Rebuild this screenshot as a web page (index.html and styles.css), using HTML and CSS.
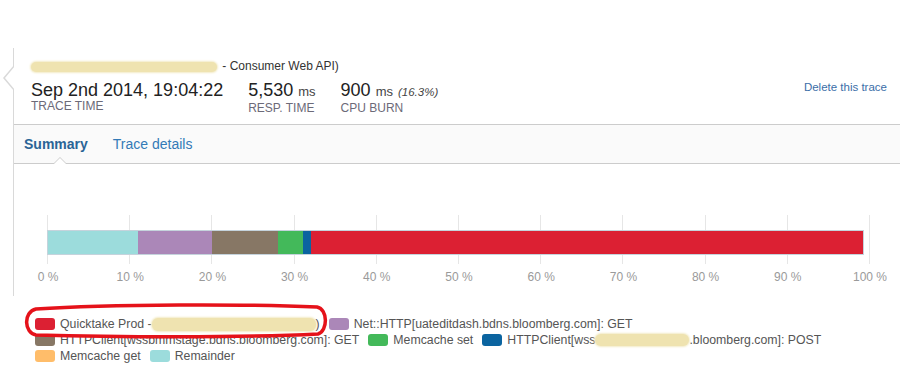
FILE: index.html
```html
<!DOCTYPE html>
<html lang="en">
<head>
    <meta charset="UTF-8">
    <title>Trace</title>
    <link rel="stylesheet" href="styles.css">
</head>
<body>

<div class="trace">
    <div class="trace-head">
        <div class="head-main">
            <div class="trace-name"><span class="redact redact-name"></span> - Consumer Web API)</div>
            <div class="stats">
                <div class="stat">
                    <div class="stat-value">Sep 2nd 2014, 19:04:22</div>
                    <div class="stat-label">TRACE TIME</div>
                </div>
                <div class="stat">
                    <div class="stat-value">5,530 <span class="unit">ms</span></div>
                    <div class="stat-label">RESP. TIME</div>
                </div>
                <div class="stat">
                    <div class="stat-value">900 <span class="unit">ms</span> <em class="pct">(16.3%)</em></div>
                    <div class="stat-label">CPU BURN</div>
                </div>
            </div>
        </div>
        <a class="delete-link" href="#">Delete this trace</a>
    </div>

    <div class="tabs">
        <a class="tab active" href="#">Summary</a>
        <a class="tab" href="#">Trace details</a>
    </div>

    <div class="chart">
        <div class="plot">
            <div class="gridline" style="left:0%"></div>
            <div class="gridline" style="left:10%"></div>
            <div class="gridline" style="left:20%"></div>
            <div class="gridline" style="left:30%"></div>
            <div class="gridline" style="left:40%"></div>
            <div class="gridline" style="left:50%"></div>
            <div class="gridline" style="left:60%"></div>
            <div class="gridline" style="left:70%"></div>
            <div class="gridline" style="left:80%"></div>
            <div class="gridline" style="left:90%"></div>
            <div class="gridline" style="left:100%"></div>
            <div class="bar">
                <div class="seg c-remainder" style="width:11.05%"></div>
                <div class="seg c-net" style="width:9.1%"></div>
                <div class="seg c-http-get" style="width:8.1%"></div>
                <div class="seg c-mc-set" style="width:3.05%"></div>
                <div class="seg c-http-post" style="width:1%"></div>
                <div class="seg c-quicktake" style="flex:1"></div>
            </div>
        </div>
        <div class="ticks">
            <span class="tick" style="left:0%">0 %</span>
            <span class="tick" style="left:10%">10 %</span>
            <span class="tick" style="left:20%">20 %</span>
            <span class="tick" style="left:30%">30 %</span>
            <span class="tick" style="left:40%">40 %</span>
            <span class="tick" style="left:50%">50 %</span>
            <span class="tick" style="left:60%">60 %</span>
            <span class="tick" style="left:70%">70 %</span>
            <span class="tick" style="left:80%">80 %</span>
            <span class="tick" style="left:90%">90 %</span>
            <span class="tick" style="left:100%">100 %</span>
        </div>
    </div>
</div>

<ul class="legend">
    <li><span class="swatch c-quicktake"></span>Quicktake Prod - <span class="redact redact-prod"></span>)</li>
    <li><span class="swatch c-net"></span>Net::HTTP[uateditdash.bdns.bloomberg.com]: GET</li>
    <li><span class="swatch c-http-get"></span>HTTPClient[wssbmmstage.bdns.bloomberg.com]: GET</li>
    <li><span class="swatch c-mc-set"></span>Memcache set</li>
    <li><span class="swatch c-http-post"></span>HTTPClient[wss<span class="redact redact-host"></span>.bloomberg.com]: POST</li>
    <li><span class="swatch c-mc-get"></span>Memcache get</li>
    <li><span class="swatch c-remainder"></span>Remainder</li>
</ul>

<!-- hand-drawn highlight round the first legend item -->
<svg class="annotation" width="923" height="388" viewBox="0 0 923 388">
    <path d="M 36 309 C 110 304, 250 304, 317 307 C 328 309, 328 331, 318 334 C 240 338, 110 337, 36 335 C 24 333, 23 312, 36 309 Z"
          fill="none" stroke="#e5121a" stroke-width="3.5"/>
</svg>

</body>
</html>
```

FILE: styles.css
```css
body {
    margin: 0;
    font-family: "Liberation Sans", Arial, sans-serif;
    color: #333;
    background: #fff;
    position: relative;
}

.trace {
    margin: 48px 23px 0 13px;
    border-left: 1px solid #d9d9d9;
    position: relative;
}

/* little arrow on the left edge */
.trace::before,
.trace::after {
    content: "";
    position: absolute;
    width: 0;
    height: 0;
    border-style: solid;
    border-color: transparent;
}
.trace::before {
    top: 17px;
    left: -11px;
    border-width: 13px 11px 13px 0;
    border-right-color: #d9d9d9;
}
.trace::after {
    top: 18px;
    left: -9px;
    border-width: 12px 10px 12px 0;
    border-right-color: #fff;
}

.trace-head {
    display: flex;
    justify-content: space-between;
    align-items: center;
    padding: 11px 13px 9px 17px;
}

.trace-name {
    font-size: 12px;
    line-height: 14px;
    color: #333;
}

.redact {
    display: inline-block;
    background: #efe3b0;
    border-radius: 6px;
    box-shadow: 0 0 2px 1px #f3ebc6;
    vertical-align: middle;
}
.redact-name {
    width: 186px;
    height: 10px;
    margin-right: 2px;
}
.redact-prod {
    width: 164px;
    height: 13px;
}
.redact-host {
    width: 94px;
    height: 12px;
}

.stats {
    display: flex;
    margin-top: 7px;
}
.stat {
    margin-right: 25px;
}
.stat-value {
    font-size: 18px;
    line-height: 20px;
    color: #222;
}
.unit {
    font-size: 13px;
    color: #444;
}
.pct {
    font-size: 11.5px;
    color: #444;
}
.stat-label {
    font-size: 12px;
    line-height: 13px;
    color: #6c6a78;
}

.delete-link {
    font-size: 11.5px;
    color: #3b6ea8;
    text-decoration: none;
}

.tabs {
    display: flex;
    gap: 25px;
    padding-left: 10px;
    background: #fafafa;
    border-top: 1px solid #cccccc;
    border-bottom: 1px solid #cccccc;
    height: 38px;
}
.tab {
    font-size: 14px;
    line-height: 38px;
    color: #337ab7;
    text-decoration: none;
    position: relative;
}
.tab.active {
    font-weight: bold;
    color: #2a6496;
}
.tab.active::before,
.tab.active::after {
    content: "";
    position: absolute;
    left: 50%;
    width: 0;
    height: 0;
    border-style: solid;
    border-color: transparent;
}
.tab.active::before {
    bottom: -1px;
    margin-left: -3px;
    border-width: 0 7px 7px 7px;
    border-bottom-color: #cccccc;
}
.tab.active::after {
    bottom: -1px;
    margin-left: -2px;
    border-width: 0 6px 6px 6px;
    border-bottom-color: #fff;
}

.chart {
    height: 132px;
    padding: 51px 0 0 34px;
    box-sizing: border-box;
}

.plot {
    position: relative;
    width: 822px;
    height: 49px;
    padding-top: 15px;
    box-sizing: border-box;
}
.gridline {
    position: absolute;
    top: 0;
    bottom: 0;
    width: 1px;
    margin-left: -1px;
    background: #e6e6e6;
}

.bar {
    position: relative;
    display: flex;
    width: 99.1%;
    height: 23px;
    margin-left: -1px;
    border: 1px solid #c5d3dc;
}
.seg {
    height: 100%;
}

.ticks {
    position: relative;
    width: 822px;
    height: 14px;
    margin-top: 6px;
}
.tick {
    position: absolute;
    top: 0;
    transform: translateX(-50%);
    font-size: 12px;
    line-height: 14px;
    color: #9a9a9a;
    white-space: nowrap;
}

.c-quicktake { background: #dc2033; }
.c-net { background: #ab87b8; }
.c-http-get { background: #877765; }
.c-mc-set { background: #43b95a; }
.c-http-post { background: #0b64a0; }
.c-mc-get { background: #ffbd6a; }
.c-remainder { background: #9cdcdc; }

.legend {
    list-style: none;
    margin: 20px 0 0 35px;
    padding: 0;
    display: flex;
    flex-wrap: wrap;
    width: 880px;
    font-size: 12.3px;
    line-height: 16px;
    color: #555;
}
.legend li {
    display: flex;
    align-items: center;
    margin-right: 9px;
    white-space: nowrap;
}
.swatch {
    display: inline-block;
    width: 20px;
    height: 12px;
    border-radius: 3px;
    margin-right: 5px;
}

.annotation {
    position: absolute;
    top: 0;
    left: 0;
    pointer-events: none;
}
```
